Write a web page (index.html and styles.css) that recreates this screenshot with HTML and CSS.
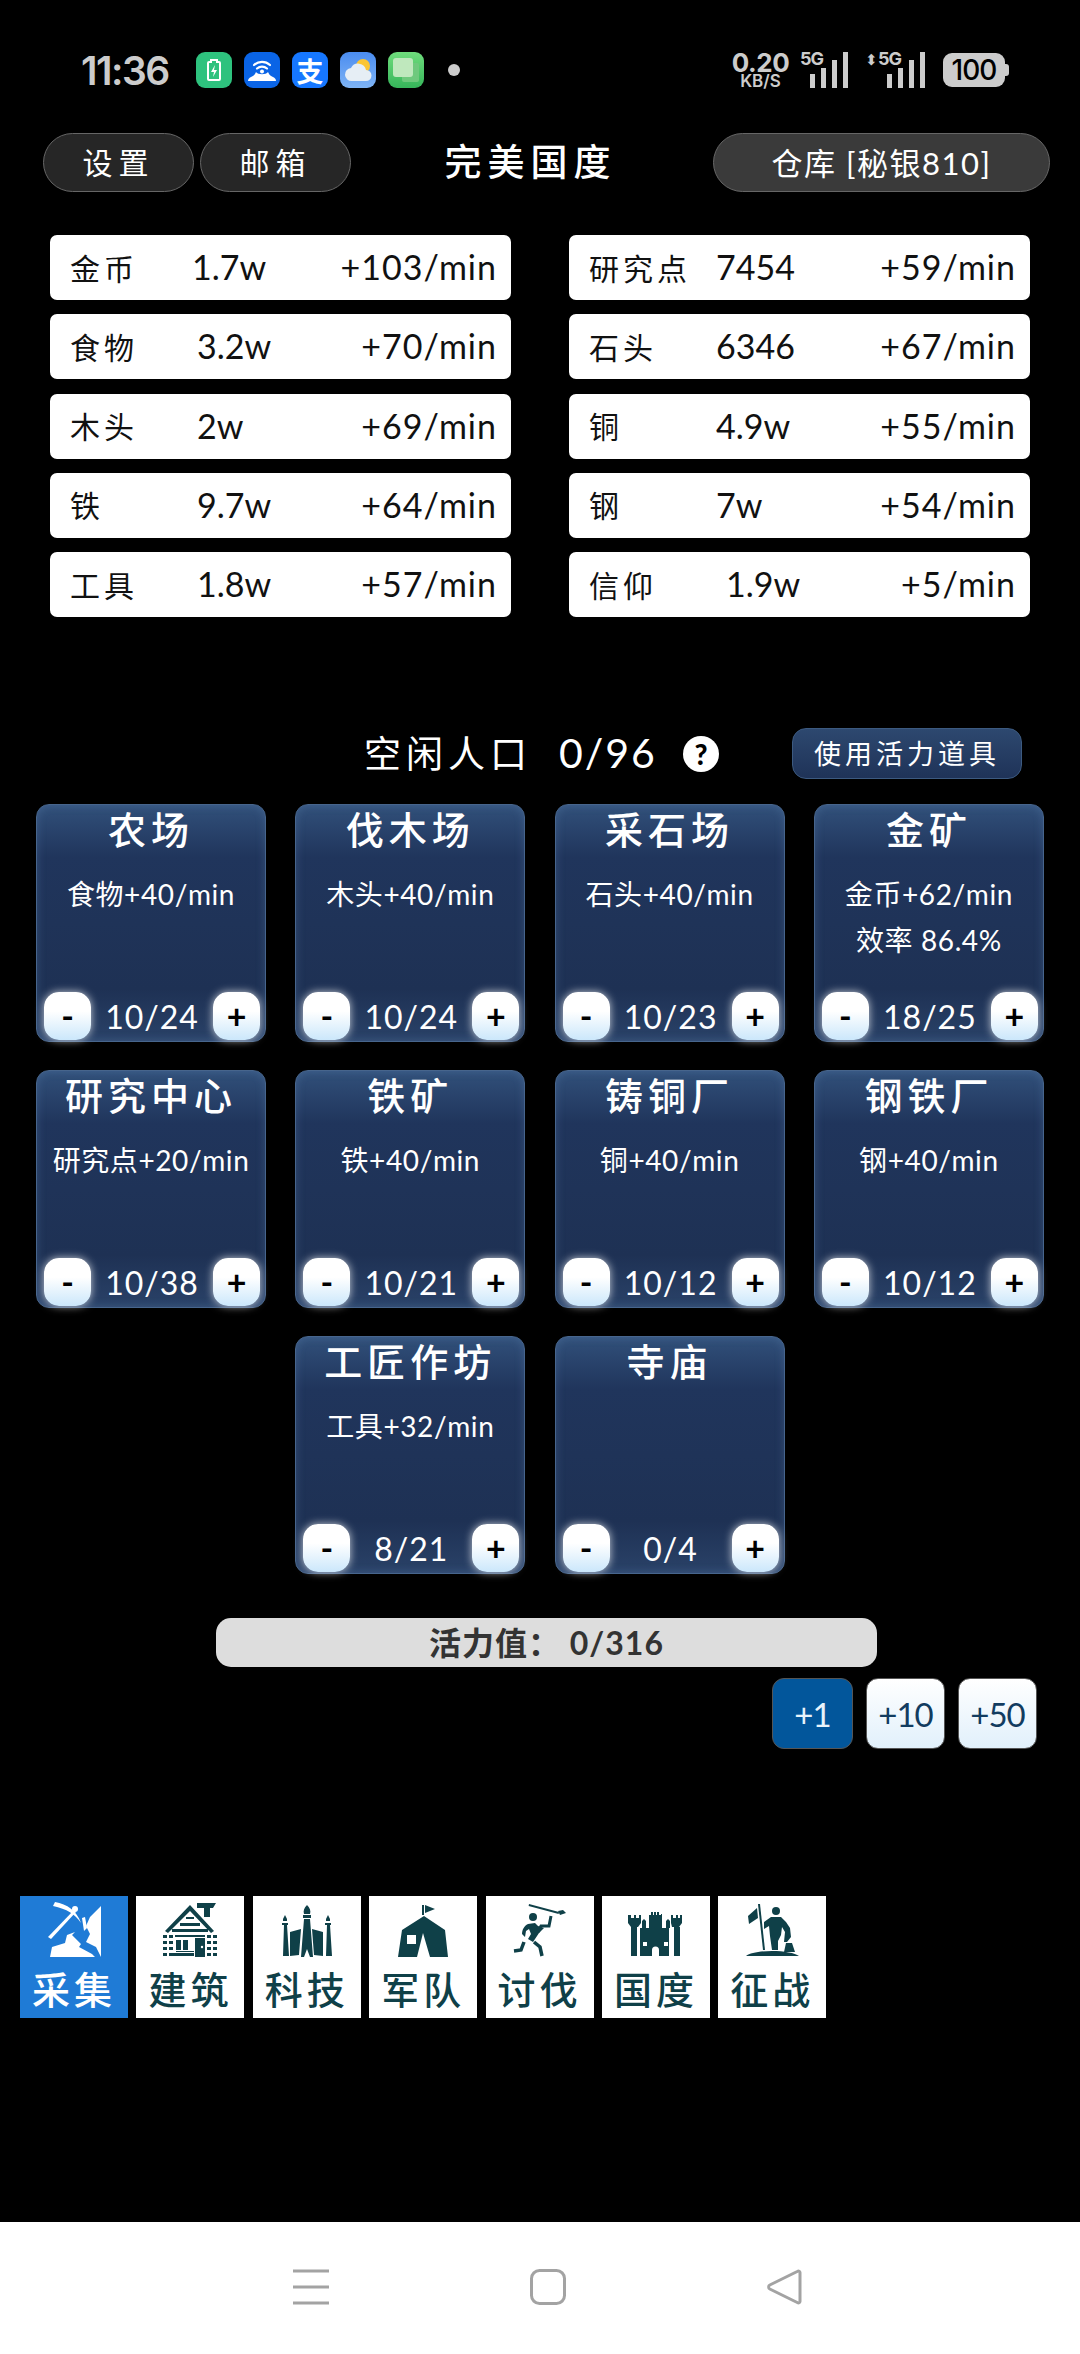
FILE: index.html
```html
<!DOCTYPE html>
<html lang="zh">
<head>
  <meta charset="UTF-8">
  <meta name="viewport" content="width=device-width, initial-scale=1.0">
  <title>完美国度</title>
  <link rel="stylesheet" href="styles.css">
</head>
<body>
  <!-- Phone status bar -->
  <div class="status">
    <span class="clock">11:36</span>
    <span class="app-icon app-battery">
      <svg viewBox="0 0 36 36"><path d="M13 10h2V8h6v2h2a1 1 0 0 1 1 1v16a1 1 0 0 1-1 1H13a1 1 0 0 1-1-1V11a1 1 0 0 1 1-1z" fill="none" stroke="#fff" stroke-width="2"/><path d="M19 13l-4 7h3l-1 5 4-7h-3z" fill="#fff"/></svg>
    </span>
    <span class="app-icon app-wifi">
      <svg viewBox="0 0 36 36"><path d="M10 13a12 12 0 0 1 16 0M13 16.500a7.500 7.500 0 0 1 10 0" fill="none" stroke="#fff" stroke-width="2.200" stroke-linecap="round"/><circle cx="18" cy="19.500" r="2" fill="#fff"/><path d="M4 29c0-2 1-3 3-4 3-1 4-3 5-5 2 3 10 3 12 0 1 2 2 4 5 5 2 1 3 2 3 4z" fill="#fff"/></svg>
    </span>
    <span class="app-icon app-pay">支</span>
    <span class="app-icon app-weather">
      <svg viewBox="0 0 36 36"><circle cx="23" cy="14" r="7" fill="#fbc531"/><path d="M12 29a6.500 6.500 0 0 1-1-13 8 8 0 0 1 15 2 5.500 5.500 0 0 1 0 11z" fill="#e6eef5"/></svg>
    </span>
    <span class="app-icon app-chat">
      <svg viewBox="0 0 36 36"><rect x="14" y="11" width="17" height="19" rx="2" fill="#6fc97d"/><rect x="5" y="6" width="20" height="19" rx="3" fill="#bfe8bd"/></svg>
    </span>
    <span class="dot"></span>
    <span class="net-speed"><b>0.20</b><small>KB/S</small></span>
    <span class="signal">
      <em>5G</em>
      <svg viewBox="0 0 38 36"><path d="M0 22h5v14H0zM11 16h5v20h-5zM22 8h5v28h-5zM33 0h5v36h-5z" fill="#ccc"/></svg>
    </span>
    <span class="signal signal-data">
      <i>⬍</i><em>5G</em>
      <svg viewBox="0 0 38 36"><path d="M0 22h5v14H0zM11 16h5v20h-5zM22 8h5v28h-5zM33 0h5v36h-5z" fill="#ccc"/></svg>
    </span>
    <span class="battery">100</span>
  </div>

  <div class="topbar">
    <button class="pill">设置</button>
    <button class="pill">邮箱</button>
    <h1 class="title">完美国度</h1>
    <button class="pill pill-store">仓库 [秘银810]</button>
  </div>

  <div class="resources">
    <div class="res"><span class="res-name">金币</span><span class="res-val res-val-left">1.7w</span><span class="res-rate">+103/min</span></div>
    <div class="res"><span class="res-name">研究点</span><span class="res-val">7454</span><span class="res-rate">+59/min</span></div>
    <div class="res"><span class="res-name">食物</span><span class="res-val">3.2w</span><span class="res-rate">+70/min</span></div>
    <div class="res"><span class="res-name">石头</span><span class="res-val">6346</span><span class="res-rate">+67/min</span></div>
    <div class="res"><span class="res-name">木头</span><span class="res-val">2w</span><span class="res-rate">+69/min</span></div>
    <div class="res"><span class="res-name">铜</span><span class="res-val">4.9w</span><span class="res-rate">+55/min</span></div>
    <div class="res"><span class="res-name">铁</span><span class="res-val">9.7w</span><span class="res-rate">+64/min</span></div>
    <div class="res"><span class="res-name">钢</span><span class="res-val">7w</span><span class="res-rate">+54/min</span></div>
    <div class="res"><span class="res-name">工具</span><span class="res-val">1.8w</span><span class="res-rate">+57/min</span></div>
    <div class="res"><span class="res-name">信仰</span><span class="res-val res-val-right">1.9w</span><span class="res-rate">+5/min</span></div>
  </div>

  <div class="idle">
    <span class="idle-label">空闲人口</span>
    <span class="idle-count">0/96</span>
    <span class="help">?</span>
    <button class="use-item">使用活力道具</button>
  </div>

  <div class="buildings">
    <div class="card">
      <h3>农场</h3>
      <p>食物+40/min</p>
      <div class="stepper"><button>-</button><span>10/24</span><button>+</button></div>
    </div>
    <div class="card">
      <h3>伐木场</h3>
      <p>木头+40/min</p>
      <div class="stepper"><button>-</button><span>10/24</span><button>+</button></div>
    </div>
    <div class="card">
      <h3>采石场</h3>
      <p>石头+40/min</p>
      <div class="stepper"><button>-</button><span>10/23</span><button>+</button></div>
    </div>
    <div class="card">
      <h3>金矿</h3>
      <p>金币+62/min</p>
      <p>效率 86.4%</p>
      <div class="stepper"><button>-</button><span>18/25</span><button>+</button></div>
    </div>
    <div class="card">
      <h3>研究中心</h3>
      <p>研究点+20/min</p>
      <div class="stepper"><button>-</button><span>10/38</span><button>+</button></div>
    </div>
    <div class="card">
      <h3>铁矿</h3>
      <p>铁+40/min</p>
      <div class="stepper"><button>-</button><span>10/21</span><button>+</button></div>
    </div>
    <div class="card">
      <h3>铸铜厂</h3>
      <p>铜+40/min</p>
      <div class="stepper"><button>-</button><span>10/12</span><button>+</button></div>
    </div>
    <div class="card">
      <h3>钢铁厂</h3>
      <p>钢+40/min</p>
      <div class="stepper"><button>-</button><span>10/12</span><button>+</button></div>
    </div>
    <div class="card card-second">
      <h3>工匠作坊</h3>
      <p>工具+32/min</p>
      <div class="stepper"><button>-</button><span>8/21</span><button>+</button></div>
    </div>
    <div class="card">
      <h3>寺庙</h3>
      <div class="stepper"><button>-</button><span>0/4</span><button>+</button></div>
    </div>
  </div>

  <div class="energy">活力值： 0/316</div>

  <div class="boosts">
    <button class="boost boost-on">+1</button>
    <button class="boost">+10</button>
    <button class="boost">+50</button>
  </div>

  <div class="tabs">
    <div class="tab tab-on">
      <svg viewBox="0 0 108 64">
        <path d="M35 6c12 2 22 9 26 21-6-9-14-14-28-17z"/>
        <path d="M28 41L54 14l2 2-25 27z"/>
        <circle cx="55" cy="13" r="3"/>
        <path d="M30 61l2-10 13-4 2-8 8-3-3 3 9 9-2 3 13 7 3 3z"/>
        <path d="M81 10v51l-5-10-10-5 4-8-4-8 4-9z"/>
        <path d="M62 22l3-1 2 11-3 3z"/>
      </svg>
      <span>采集</span>
    </div>
    <div class="tab">
      <svg viewBox="0 0 108 64">
        <path d="M61 7h19l-3 5h-3v9h-6v-9h-7z"/>
        <path d="M29 35L54 9l24 26-3 2-21-22-22 22z"/>
        <path d="M50 21h8v2h-8zM44 27h20v3H44zM36 33h36v3H36z"/>
        <path d="M33 39h4v3h-4zM39 39h30v2H39zM71 39h4v3h-4zM27 39h4v3h-4zM77 39h4v3h-4z"/>
        <path d="M27 45h4v3h-4zM77 45h4v3h-4zM27 51h4v3h-4zM77 51h4v3h-4zM27 57h4v3h-4zM77 57h4v3h-4z"/>
        <path d="M33 45h4v3h-4zM33 51h4v3h-4zM71 45h4v3h-4zM71 51h4v3h-4zM33 57h25v3H33zM71 57h4v3h-4z"/>
        <path d="M40 44h5v10h-5zM47 44h5v10h-5zM40 55h18v1H40z"/>
        <path d="M59 42h10v19H59z"/>
        <circle cx="66" cy="51" r="1.200" fill="#fff"/>
      </svg>
      <span>建筑</span>
    </div>
    <div class="tab">
      <svg viewBox="0 0 108 64">
        <path d="M54 9c3 3 4 6 3 9h-6c-1-3 0-6 3-9z"/>
        <path d="M50 19h8v3h-8zM51 23h6l3 38h-3l-3-8-3 8h-3z"/>
        <path d="M32 19l2 4v2h-4v-2zM75 19l2 4v2h-4v-2z"/>
        <path d="M29 27h6v2h-1l2 31h-6l1-31h-2zM72 27h6v2h-1l2 31h-6l1-31h-2z"/>
        <path d="M37 36l11-3-2 26-9 1zM70 36l-11-3 2 26 9 1z"/>
      </svg>
      <span>科技</span>
    </div>
    <div class="tab">
      <svg viewBox="0 0 108 64">
        <path d="M53 9h2v10h-2zM56 9l10 4-10 4z"/>
        <path fill-rule="evenodd" d="M55 20l21 14 3 27H61l-7-24-6 24H29l4-27zM38 39v9h9v-9z"/>
      </svg>
      <span>军队</span>
    </div>
    <div class="tab">
      <svg viewBox="0 0 108 64">
        <path d="M43 8l30 8-.4 2-30-8z"/>
        <path d="M72 15l5-1 3 3-6 2z"/>
        <circle cx="47" cy="21" r="4"/>
        <path d="M65 20l-2 10-8 0-3 6" fill="none" stroke-width="3"/>
        <path d="M42 28c-4 2-6 6-6 10l3 3 1-6 3-2 2 5-3 5 5 3 6-9 5-5-6-2-3-3z"/>
        <path d="M38 46l-3 8-7 1M48 46l6 5 2 9" fill="none" stroke-width="3.500"/>
      </svg>
      <span>讨伐</span>
    </div>
    <div class="tab">
      <svg viewBox="0 0 108 64">
        <path d="M26 19h3v3h3v-3h2v3h3v-3h2v8l-3 4H29l-3-4zM69 19h2v3h3v-3h2v3h2v-3h2v8l-3 4h-7l-1-4z"/>
        <path d="M29 31h6v29h-6zM72 31h6v29h-6z"/>
        <path d="M47 19h2v-3h2v3h1v-3h2v3h1v-3h2v3h2v-1h1v14H47z"/>
        <path fill-rule="evenodd" d="M38 32h2v-7l2-2 2 2v7h20v-7l2-2 2 2v7h-1v28H57v-6a3.500 3.500 0 0 0-7 0v6H38zM41 46v4h4v-4zM62 46v4h4v-4z"/>
      </svg>
      <span>国度</span>
    </div>
    <div class="tab">
      <svg viewBox="0 0 108 64">
        <path d="M40 8h2l5 46h-2z"/>
        <path d="M39 12l1 10-9 6-1-8z"/>
        <circle cx="58" cy="15" r="4"/>
        <path d="M46 26l7-5h10l5 5 4 6 1 9-4 5h-3l1-10-3-5-1 8-3 6v9h-6l-2-14-1-10-5 3z"/>
        <path d="M66 56l2-9h6l3 9z"/>
        <path d="M28 60c4-3 14-5 26-5s23 2 27 5z"/>
      </svg>
      <span>征战</span>
    </div>
  </div>

  <!-- Phone navigation bar -->
  <div class="navbar">
    <svg class="nav-icon" viewBox="0 0 36 36"><path d="M0 2h36M0 18h36M0 34h36" fill="none" stroke="#a3a3a3" stroke-width="3"/></svg>
    <svg class="nav-icon" viewBox="0 0 36 36"><rect x="1.500" y="1.500" width="33" height="33" rx="8" fill="none" stroke="#a3a3a3" stroke-width="3"/></svg>
    <svg class="nav-icon" viewBox="0 0 36 36"><path d="M33 3.500v29a1.500 1.500 0 0 1-2.300 1.200L2.800 20a2.300 2.300 0 0 1 0-4L30.700 2.300A1.500 1.500 0 0 1 33 3.500z" fill="none" stroke="#a3a3a3" stroke-width="3"/></svg>
  </div>
</body>
</html>
```

FILE: styles.css
```css
* {
  box-sizing: border-box;
}
body {
  margin: 0;
  width: 1080px;
  height: 2354px;
  overflow: hidden;
  display: flex;
  flex-direction: column;
  background: #000;
  color: #fff;
  font-family: Lato, "Noto Sans CJK SC", sans-serif;
}
button {
  font-family: inherit;
  padding: 0;
  cursor: pointer;
}

/* status bar */
.status {
  height: 133px;
  padding: 52px 0 45px 81px;
  display: flex;
  align-items: center;
  flex-shrink: 0;
  color: #ccc;
  font-family: Inter, Roboto, sans-serif;
}
.clock {
  width: 115px;
  font-size: 39px;
  font-weight: 600;
  letter-spacing: -1.500px;
}
.app-icon {
  width: 36px;
  height: 36px;
  margin-right: 12px;
  border-radius: 9px;
  display: flex;
  align-items: center;
  justify-content: center;
  overflow: hidden;
}
.app-icon svg {
  width: 36px;
  height: 36px;
}
.app-battery {
  background: #2ec27e;
}
.app-wifi {
  background: #0a64e6;
}
.app-pay {
  background: #1677ff;
  color: #fff;
  font: 700 27px "Noto Sans CJK SC", sans-serif;
}
.app-weather {
  background: linear-gradient(#4a8cf0, #7fb4f5);
}
.app-chat {
  background: linear-gradient(#6fdc7c, #36b55a);
}
.dot {
  width: 12px;
  height: 12px;
  margin-left: 12px;
  border-radius: 50%;
  background: #ccc;
}
.net-speed {
  margin-left: 272px;
  width: 57px;
  display: flex;
  flex-direction: column;
  align-items: center;
  line-height: 1;
}
.net-speed b {
  font-size: 26px;
  height: 23px;
  line-height: 23px;
  letter-spacing: -0.500px;
}
.net-speed small {
  font-size: 17px;
  font-weight: 600;
  line-height: 15px;
}
.signal {
  position: relative;
  width: 48px;
  height: 36px;
  margin-left: 11px;
  display: block;
}
.signal svg {
  position: absolute;
  left: 10px;
  top: 0;
  width: 38px;
  height: 36px;
}
.signal em {
  position: absolute;
  left: 0;
  top: -4px;
  font-size: 18px;
  font-weight: 700;
  font-style: normal;
  letter-spacing: -1px;
}
.signal-data {
  width: 60px;
  margin-left: 17px;
}
.signal-data svg {
  left: 22px;
}
.signal-data em {
  left: 13px;
}
.signal-data i {
  position: absolute;
  left: 0;
  top: -2px;
  font-size: 15px;
  font-style: normal;
}
.battery {
  position: relative;
  margin-left: 18px;
  width: 62px;
  height: 34px;
  border-radius: 9px;
  background: #ccc;
  color: #000;
  font-size: 28px;
  font-weight: 500;
  line-height: 34px;
  text-align: center;
  letter-spacing: -1px;
}
.battery::after {
  content: "";
  position: absolute;
  left: 62px;
  top: 11px;
  width: 4px;
  height: 12px;
  border-radius: 0 3px 3px 0;
  background: #ccc;
}

/* top buttons */
.topbar {
  height: 59px;
  padding-left: 43px;
  display: flex;
  align-items: center;
  flex-shrink: 0;
}
.pill {
  width: 151px;
  height: 59px;
  margin-right: 6px;
  padding-bottom: 3px;
  border: 1px solid #666;
  border-radius: 30px;
  background: #262626;
  color: #fff;
  font-size: 30px;
  letter-spacing: 6px;
}
.pill-store {
  width: 337px;
  margin: 0;
  background: #3a3a3a;
  font-size: 31px;
  letter-spacing: 1.500px;
}
.title {
  width: 347px;
  margin: 0 9px 5px 0;
  font-size: 37px;
  font-weight: 500;
  letter-spacing: 6px;
  text-align: center;
}

/* resource list */
.resources {
  margin: 43px 50px 0;
  display: grid;
  grid-template-columns: 461px 461px;
  justify-content: space-between;
  row-gap: 14.300px;
  flex-shrink: 0;
}
.res {
  height: 65px;
  padding: 0 14px 2px 20px;
  display: flex;
  align-items: center;
  border-radius: 7px;
  background: #fff;
  color: #111;
  font-size: 34px;
}
.res-name {
  width: 127px;
  font-size: 30px;
  letter-spacing: 4px;
  flex-shrink: 0;
}
.res-val-left {
  margin-left: -5px;
}
.res-val-right {
  margin-left: 10px;
}
.res-rate {
  margin-left: auto;
  letter-spacing: 1px;
}

/* idle population */
.idle {
  height: 51px;
  margin-top: 111px;
  padding-left: 364px;
  display: flex;
  align-items: center;
  flex-shrink: 0;
}
.idle-label {
  width: 195px;
  margin-bottom: 4px;
  font-size: 37px;
  letter-spacing: 5px;
}
.idle-count {
  width: 124px;
  margin-bottom: 2px;
  font-size: 41px;
  letter-spacing: 2px;
}
.help {
  width: 36px;
  height: 36px;
  border-radius: 50%;
  background: #fff;
  color: #000;
  font-size: 28px;
  font-weight: 900;
  line-height: 36px;
  text-align: center;
}
.use-item {
  width: 230px;
  height: 51px;
  margin-left: 73px;
  padding-bottom: 2px;
  border: 1px solid #3c5a80;
  border-radius: 14px;
  background: linear-gradient(#2d486f, #1f3358);
  color: #fff;
  font-size: 27px;
  letter-spacing: 4px;
}

/* building cards */
.buildings {
  margin: 25px 0 0 36px;
  display: grid;
  grid-template-columns: repeat(4, 230px);
  grid-auto-rows: 238px;
  gap: 28px 29.300px;
  flex-shrink: 0;
}
.card {
  padding-top: 1px;
  display: flex;
  flex-direction: column;
  border: 1px solid #47658c;
  border-radius: 13px;
  background: linear-gradient(#31507a, #20355c 22%, #1e3154 78%, #2a4268);
  box-shadow: inset 0 0 10px rgba(120, 160, 210, 0.25);
  text-align: center;
}
.card-second {
  grid-column: 2;
}
.card h3 {
  margin: 0 0 26px;
  font-size: 38px;
  font-weight: 500;
  line-height: 46px;
  letter-spacing: 5px;
}
.card p {
  margin: 0 0 14px;
  font-size: 28px;
  line-height: 32px;
  letter-spacing: 0.600px;
}
.stepper {
  margin-top: auto;
  padding: 0 5px 1px 7px;
  display: flex;
  align-items: center;
  justify-content: space-between;
  font-size: 32px;
  letter-spacing: 1px;
}
.stepper button {
  width: 47px;
  height: 48px;
  border: none;
  border-radius: 15px;
  background: linear-gradient(#fff 40%, #cbe7fb);
  box-shadow: 0 0 9px rgba(255, 255, 255, 0.75);
  color: #000;
  font-size: 34px;
  font-weight: 700;
  line-height: 46px;
}

/* energy bar */
.energy {
  width: 661px;
  height: 49px;
  margin: 44px 0 0 216px;
  border-radius: 15px;
  background: #ddd;
  color: #333;
  font-size: 32px;
  font-weight: 700;
  line-height: 49px;
  letter-spacing: 1px;
  text-align: center;
  flex-shrink: 0;
}
.boosts {
  margin-top: 11px;
  padding-right: 43px;
  display: flex;
  justify-content: flex-end;
  gap: 13px;
  flex-shrink: 0;
}
.boost {
  width: 79px;
  height: 71px;
  border: 1px solid #555;
  border-radius: 12px;
  background: linear-gradient(#fff, #e1f0fb);
  color: #123c60;
  font-size: 33px;
  letter-spacing: -1px;
}
.boost-on {
  width: 81px;
  background: #02569b;
  color: #e8f3fb;
}

/* bottom tabs */
.tabs {
  margin-top: 147px;
  padding-left: 20px;
  display: flex;
  gap: 8.400px;
  flex-shrink: 0;
}
.tab {
  width: 108px;
  height: 122px;
  display: flex;
  flex-direction: column;
  align-items: center;
  background: #fff;
  color: #0f4048;
  fill: #0f4048;
  stroke: #0f4048;
  stroke-width: 0;
  font-size: 38px;
  font-weight: 500;
  letter-spacing: 4px;
  line-height: 58px;
}
.tab svg {
  width: 108px;
  height: 64px;
  flex-shrink: 0;
}
.tab-on {
  background: #1f7bd6;
  color: #fff;
  fill: #fff;
}

/* phone nav */
.navbar {
  height: 132px;
  margin-top: auto;
  padding-left: 293px;
  display: flex;
  align-items: center;
  background: #fff;
  flex-shrink: 0;
}
.nav-icon {
  width: 36px;
  height: 36px;
  margin-right: 201px;
  margin-bottom: 2px;
}
```
